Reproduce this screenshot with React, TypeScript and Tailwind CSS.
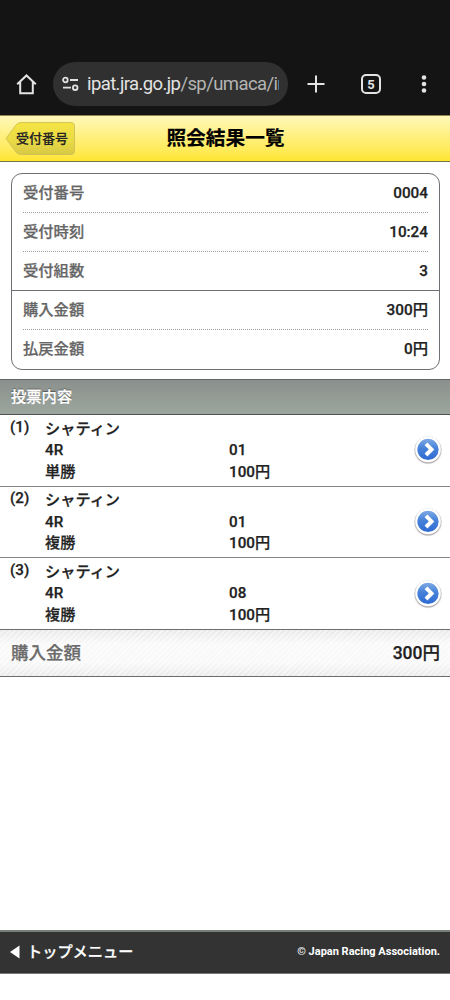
import React from 'react';

interface Bet {
  no: number;
  place: string;
  race: string;
  type: string;
  horse: string;
  amount: string;
}

const summary = [
  { label: '受付番号', value: '0004', line: 'h-[39px] border-b border-dotted border-[#9a9a9a] mx-[11px]' },
  { label: '受付時刻', value: '10:24', line: 'h-[39px] border-b border-dotted border-[#9a9a9a] mx-[11px]' },
  { label: '受付組数', value: '3', line: 'h-[39px] border-b border-[#6f6f75] px-[11px]' },
  { label: '購入金額', value: '300円', line: 'h-[39px] border-b border-dotted border-[#9a9a9a] mx-[11px]' },
  { label: '払戻金額', value: '0円', line: 'h-[38px] mx-[11px]' },
];

const bets: Bet[] = [
  { no: 1, place: 'シャティン', race: '4R', type: '単勝', horse: '01', amount: '100円' },
  { no: 2, place: 'シャティン', race: '4R', type: '複勝', horse: '01', amount: '100円' },
  { no: 3, place: 'シャティン', race: '4R', type: '複勝', horse: '08', amount: '100円' },
];

const BrowserBar: React.FC = () => (
  <div className="flex h-[115px] items-center bg-[#141414] pt-[53px] text-[#e3e3e3]">
    <svg className="ml-4 h-[22px] w-[22px] shrink-0" viewBox="0 0 22 22" fill="none" stroke="currentColor" strokeWidth="2">
      <path d="M1.2 11.3 10.5 2.5l9.3 8.8M4.2 9v11.2h12.6V9" />
    </svg>
    <div className="ml-[15px] flex h-11 w-[235px] shrink-0 items-center rounded-full bg-[#303030] pl-[9px]">
      <svg className="h-4 w-[17px] shrink-0" viewBox="0 0 17 16" fill="none" stroke="currentColor" strokeWidth="1.8">
        <circle cx="3.4" cy="4" r="2.3" />
        <path d="M8 4h8M1 11.7h8" />
        <circle cx="13.2" cy="11.7" r="2.3" />
      </svg>
      <div className="ml-[8px] w-[192px] overflow-hidden text-[18.5px] leading-6 tracking-[-0.6px] whitespace-nowrap">
        ipat.jra.go.jp<span className="text-[#b4b4b4]">/sp/umaca/in</span>
      </div>
    </div>
    <svg className="ml-[19px] h-[18px] w-[18px] shrink-0" viewBox="0 0 18 18" stroke="currentColor" strokeWidth="2">
      <path d="M9 0.5v17M0.5 9h17" />
    </svg>
    <div className="ml-9 flex h-5 w-5 shrink-0 items-center justify-center rounded-[5px] border-2 border-[#e3e3e3] text-[13px] leading-none font-bold">
      5
    </div>
    <svg className="ml-[31px] h-5 w-5 shrink-0" viewBox="0 0 20 20" fill="currentColor">
      <circle cx="12" cy="3.5" r="2.3" />
      <circle cx="12" cy="10" r="2.3" />
      <circle cx="12" cy="16.5" r="2.3" />
    </svg>
  </div>
);

const Header: React.FC = () => (
  <header className="grid h-[47px] grid-cols-[75px_1fr_75px] items-center border-t border-b border-t-[#8f8550] border-b-[#777447] bg-linear-to-b from-[#fff8b8] via-[#ffef78] to-[#ffe62e]">
    <button className="relative ml-[5px] h-[34px] w-[71px]">
      <svg className="absolute inset-0" width="71" height="34" viewBox="0 0 71 34">
        <defs>
          <linearGradient id="back" x1="0" y1="0" x2="0" y2="1">
            <stop offset="0" stopColor="#f4e443" />
            <stop offset="0.5" stopColor="#ecdc45" />
            <stop offset="1" stopColor="#d8c945" />
          </linearGradient>
        </defs>
        <path
          d="M1 16.5 10.5 3.5Q12.5 0.5 16 0.5H66Q69.5 0.5 69.5 4V29Q69.5 32.5 66 32.5H16Q12.5 32.5 10.5 29.5Z"
          fill="url(#back)"
          stroke="#c9bd55"
          strokeWidth="0.8"
        />
      </svg>
      <span className="relative block pr-[1px] pl-[4px] text-[13px] leading-[30px] font-medium text-[#222] [-webkit-text-stroke:0.2px]">
        受付番号
      </span>
    </button>
    <h1 className="pl-px text-center text-[19.7px] leading-none font-bold whitespace-nowrap text-black [-webkit-text-stroke:0.2px]">
      照会結果一覧
    </h1>
  </header>
);

const ArrowIcon: React.FC = () => (
  <svg width="30" height="30" viewBox="0 0 30 30">
    <defs>
      <linearGradient id="ball" x1="0" y1="0" x2="0" y2="1">
        <stop offset="0" stopColor="#7eaae4" />
        <stop offset="0.45" stopColor="#4681d9" />
        <stop offset="1" stopColor="#2e6bd3" />
      </linearGradient>
    </defs>
    <circle cx="15" cy="15.3" r="14" fill="#000" opacity="0.1" />
    <circle cx="15" cy="15.1" r="13.3" fill="#000" opacity="0.22" />
    <circle cx="15" cy="14.4" r="12.8" fill="#fff" />
    <circle cx="15" cy="14.4" r="10.6" fill="url(#ball)" />
    <path d="m13 8.8 5.6 5.6L13 20" fill="none" stroke="#fff" strokeWidth="3.9" />
  </svg>
);

const BetRow: React.FC<{ bet: Bet; last: boolean }> = ({ bet, last }) => (
  <li
    className={`flex pl-[10px] text-[15.2px] leading-[21.5px] font-medium [-webkit-text-stroke:0.25px] ${
      last ? 'h-[71px]' : 'h-[71.6px] border-b border-[#858585]'
    }`}
  >
    <span className="w-[35px] pt-[1.5px]">({bet.no})</span>
    <div className="w-[184px] pt-[3.5px]">
      <p>{bet.place}</p>
      <p>{bet.race}</p>
      <p>{bet.type}</p>
    </div>
    <div className="flex-1 pt-[25px]">
      <p>{bet.horse}</p>
      <p>{bet.amount}</p>
    </div>
    <div className="flex items-center pr-[7px]">
      <ArrowIcon />
    </div>
  </li>
);

const App: React.FC = () => {
  return (
    <div className="flex h-[1000px] w-[450px] flex-col overflow-hidden bg-white font-['Roboto','Noto_Sans_CJK_JP',sans-serif] text-[#222]">
      <BrowserBar />
      <Header />

      <main className="flex-1">
        <section className="mt-[11px] mr-[10px] ml-[11px] h-[197px] rounded-[11px] border border-[#6f6f75]">
          {summary.map((row) => (
            <div
              key={row.label}
              className={`flex items-center justify-between pt-px text-[15.3px] font-medium [-webkit-text-stroke:0.25px] ${row.line}`}
            >
              <span className="text-[#666]">{row.label}</span>
              <span>{row.value}</span>
            </div>
          ))}
        </section>

        <h2 className="mt-[9px] h-9 border-t border-b border-t-[#626565] border-b-[#4e5350] bg-linear-to-b from-[#8b908c] to-[#9ba69e] pl-[11px] text-[15.3px] leading-[35px] font-medium text-white [-webkit-text-stroke:0.25px] [text-shadow:0_-1px_1px_#555]">
          投票内容
        </h2>
        <ul>
          {bets.map((bet, i) => (
            <BetRow key={bet.no} bet={bet} last={i === bets.length - 1} />
          ))}
        </ul>

        <div className="flex h-12 items-center justify-between border-t border-b border-[#6d6d6d] bg-[repeating-linear-gradient(135deg,#fff0_0_2.5px,#ffffff80_2.5px_4px),linear-gradient(#e9e9e9,#f9f9f9_30%,#f9f9f9_70%,#ebebeb)] pr-[10px] pb-px pl-[11px] text-[17.5px] font-medium [-webkit-text-stroke:0.25px]">
          <span className="text-[#6b6b6b]">購入金額</span>
          <span>300円</span>
        </div>
      </main>

      <footer className="mb-[26px] flex h-11 items-center justify-between border-t-2 border-b border-t-[#777f79] border-b-[#777] bg-[#333] px-[10px] font-medium text-white">
        <div className="flex items-center">
          <svg width="10" height="14" viewBox="0 0 10 14" fill="currentColor">
            <path d="M0 7 9.5 0.5v13z" />
          </svg>
          <span className="ml-[7px] text-[15.2px] [-webkit-text-stroke:0.25px]">トップメニュー</span>
        </div>
        <small className="text-[11px] font-bold">© Japan Racing Association.</small>
      </footer>
    </div>
  );
};

export default App;
